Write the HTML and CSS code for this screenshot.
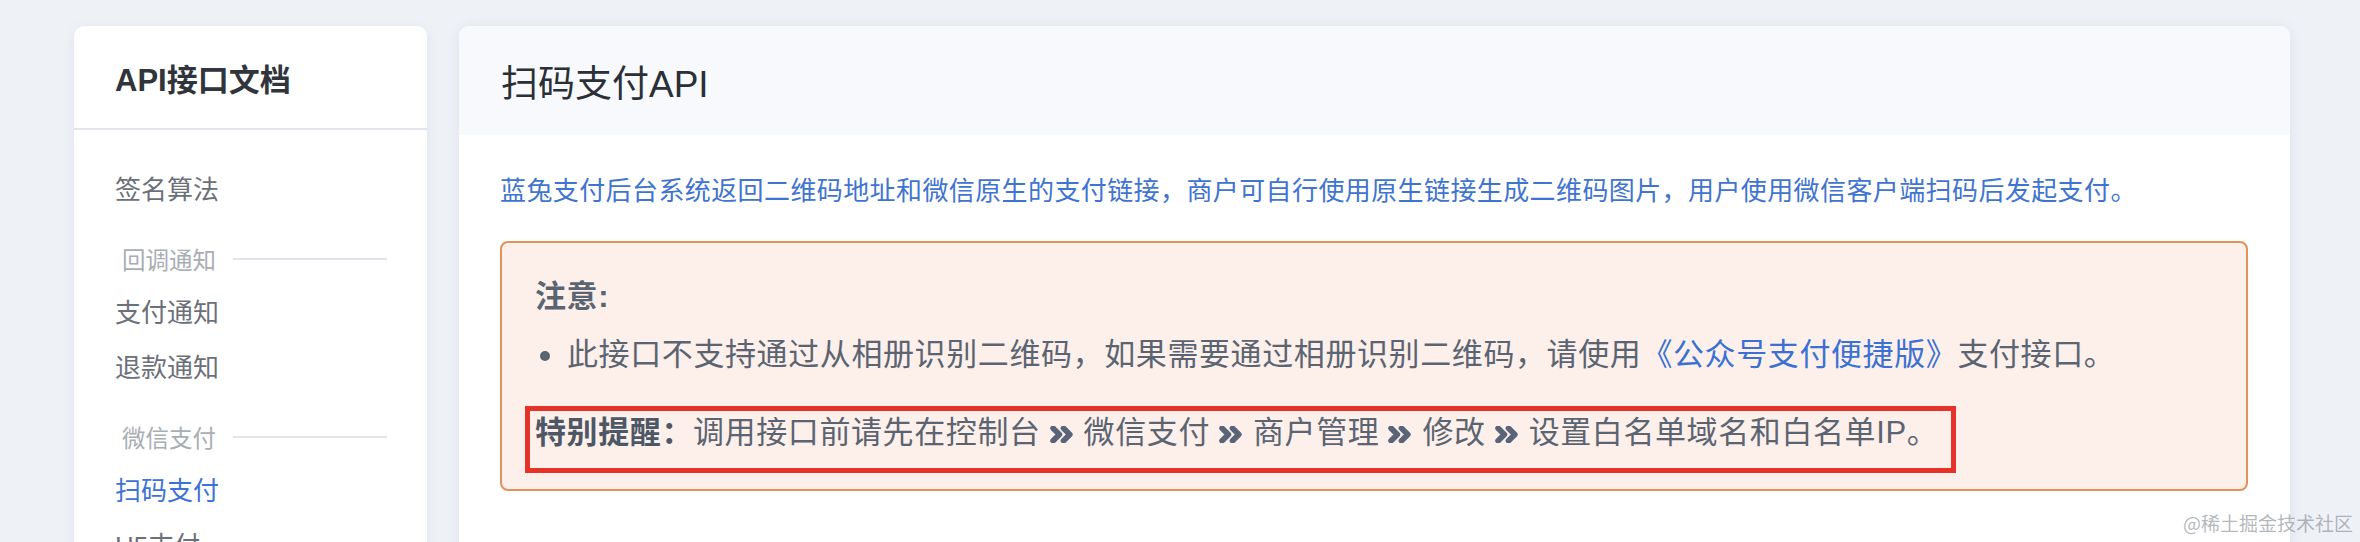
FILE: index.html
```html
<!DOCTYPE html>
<html lang="zh-CN">
<head>
<meta charset="utf-8">
<title>扫码支付API</title>
<link rel="stylesheet" href="styles.css">
</head>
<body>
<div class="page">
  <aside class="sidebar">
    <div class="side-head">API接口文档</div>
    <nav class="side-nav">
      <a class="nav-item">签名算法</a>
      <div class="nav-group"><span>回调通知</span><i class="rule"></i></div>
      <a class="nav-item">支付通知</a>
      <a class="nav-item">退款通知</a>
      <div class="nav-group"><span>微信支付</span><i class="rule"></i></div>
      <a class="nav-item active">扫码支付</a>
      <a class="nav-item">H5支付</a>
    </nav>
  </aside>
  <main class="content">
    <header class="content-head">扫码支付API</header>
    <section class="content-body">
      <p class="desc">蓝兔支付后台系统返回二维码地址和微信原生的支付链接，商户可自行使用原生链接生成二维码图片，用户使用微信客户端扫码后发起支付。</p>
      <div class="notice">
        <div class="notice-title">注意:</div>
        <ul class="notice-list">
          <li>此接口不支持通过从相册识别二维码，如果需要通过相册识别二维码，请使用<a class="link">《公众号支付便捷版》</a>支付接口。</li>
        </ul>
        <div class="highlight"><b>特别提醒：</b>调用接口前请先在控制台<svg class="chev" viewBox="0 0 24 16"><path d="M3 2l6 6-6 6M13 2l6 6-6 6"/></svg>微信支付<svg class="chev" viewBox="0 0 24 16"><path d="M3 2l6 6-6 6M13 2l6 6-6 6"/></svg>商户管理<svg class="chev" viewBox="0 0 24 16"><path d="M3 2l6 6-6 6M13 2l6 6-6 6"/></svg>修改<svg class="chev" viewBox="0 0 24 16"><path d="M3 2l6 6-6 6M13 2l6 6-6 6"/></svg>设置白名单域名和白名单IP。</div>
      </div>
    </section>
  </main>
</div>
<div class="watermark">@稀土掘金技术社区</div>
</body>
</html>
```

FILE: styles.css
```css
html, body {
  margin: 0;
  padding: 0;
  height: 542px;
  overflow: hidden;
}
body {
  background: #eef1f6;
  font-family: "Liberation Sans", "Noto Sans CJK SC", sans-serif;
  color: #2b2f36;
  position: relative;
}
.page {
  display: flex;
  align-items: flex-start;
  gap: 32px;
  padding: 26px 70px 0 74px;
}
.sidebar {
  width: 353px;
  flex: none;
  background: #fff;
  border-radius: 10px;
  box-shadow: 0 2px 14px rgba(30, 45, 80, 0.06);
  height: 600px;
}
.side-head {
  height: 102px;
  display: flex;
  align-items: center;
  padding-left: 41px;
  font-size: 31px;
  font-weight: 600;
  color: #30343b;
  border-bottom: 2px solid #e2e5eb;
}
.side-nav {
  padding-top: 33px;
  display: flex;
  flex-direction: column;
}
.nav-item {
  display: block;
  height: 55px;
  line-height: 55px;
  padding-left: 41px;
  font-size: 26px;
  color: #6b7079;
}
.nav-item.active {
  color: #3d72d6;
}
.nav-group {
  margin-top: 13px;
  height: 55px;
  display: flex;
  align-items: center;
  gap: 17px;
  padding-left: 48px;
  padding-right: 40px;
  font-size: 23.5px;
  color: #a9adb4;
}
.nav-group .rule {
  flex: 1;
  height: 2px;
  background: #e1e4ea;
}
.content {
  flex: 1;
  background: #fff;
  border-radius: 10px;
  box-shadow: 0 2px 16px rgba(30, 45, 80, 0.07);
  height: 600px;
  overflow: hidden;
}
.content-head {
  height: 109px;
  display: flex;
  align-items: center;
  padding-left: 42px;
  font-size: 37px;
  color: #2b2f36;
  background: #f7f9fc;
}
.content-body {
  padding: 36px 42px 0 41px;
}
.desc {
  margin: 0;
  line-height: 40px;
  font-size: 26px;
  letter-spacing: 0.4px;
  color: #3f74d0;
}
.notice {
  margin-top: 30px;
  background: #fdf0ea;
  border: 2px solid #e2915b;
  border-radius: 8px;
  padding: 32px 33px 16px 33px;
  color: #5b6472;
  font-size: 31px;
  letter-spacing: 0.6px;
}
.notice-title {
  line-height: 44px;
  font-weight: 700;
}
.notice-list {
  list-style: none;
  margin: 14px 0 0 0;
  padding: 0;
}
.notice-list li {
  position: relative;
  line-height: 44px;
  padding-left: 32px;
}
.notice-list li::before {
  content: "";
  position: absolute;
  left: 5px;
  top: 18px;
  width: 10px;
  height: 10px;
  border-radius: 50%;
  background: #5b6472;
}
.link {
  color: #3b70d4;
}
.highlight {
  width: fit-content;
  margin: 29px 0 0 -10px;
  border: 5px solid #e5332a;
  padding: 0 13px 13px 5px;
  line-height: 44px;
  white-space: nowrap;
}
.highlight b {
  color: #4e5766;
  font-weight: 700;
}
.chev {
  width: 25px;
  height: 17px;
  margin: 0 9px;
  vertical-align: 0px;
}
.chev path {
  fill: none;
  stroke: #5a6478;
  stroke-width: 5.5;
  stroke-linecap: round;
  stroke-linejoin: round;
}
.watermark {
  position: absolute;
  right: 7px;
  bottom: 6px;
  font-family: "Noto Sans CJK SC", sans-serif;
  font-size: 19px;
  color: rgba(130, 136, 146, 0.6);
}
```
